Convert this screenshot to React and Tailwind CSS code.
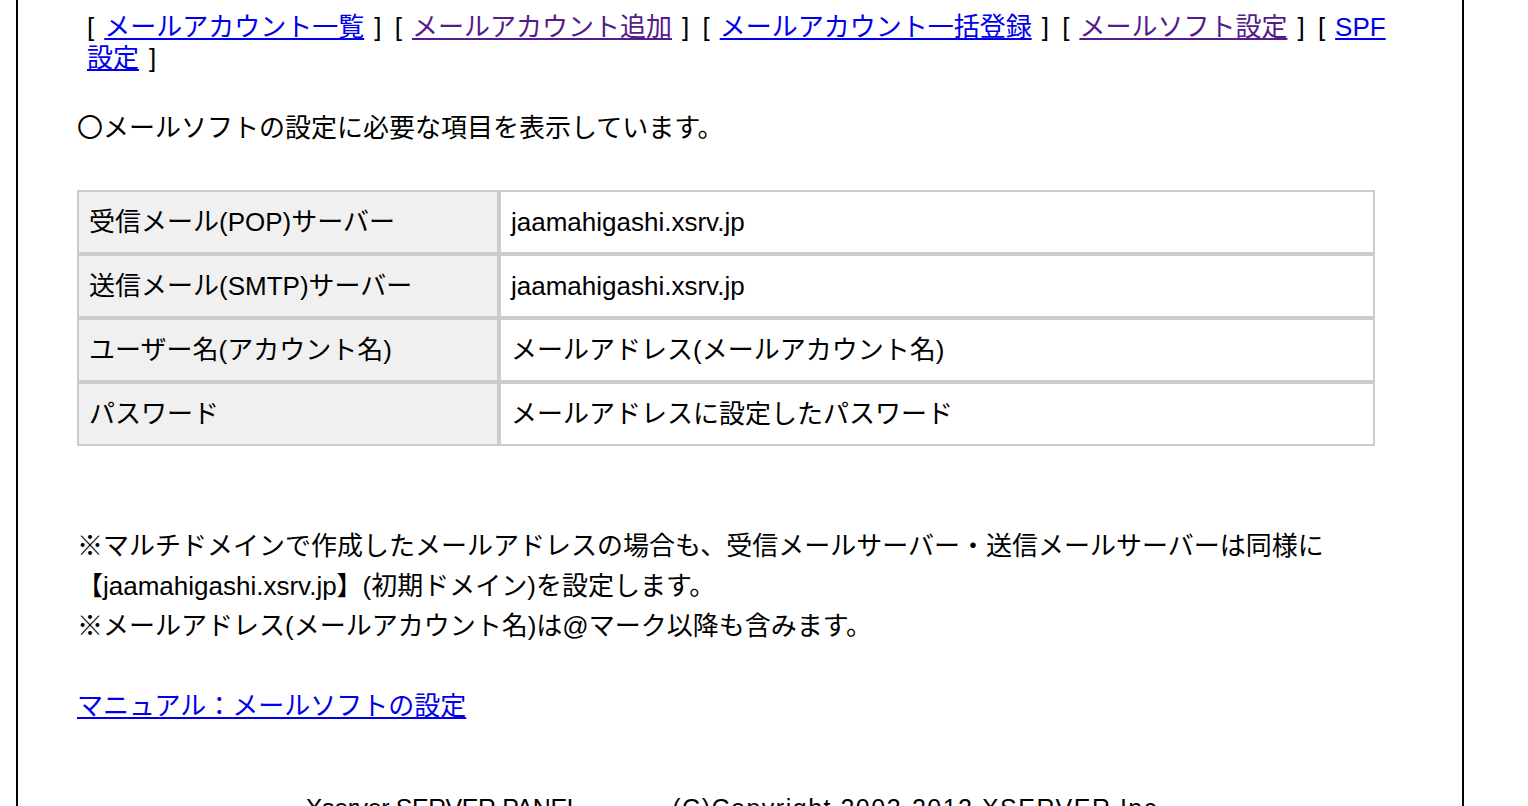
import React from 'react';

const font = { fontFamily: '"Liberation Sans", "Noto Sans CJK JP", sans-serif' };

export default function App() {

    const navLinks = [
        { label: "メールアカウント一覧", visited: false },
        { label: "メールアカウント追加", visited: true },
        { label: "メールアカウント一括登録", visited: false },
        { label: "メールソフト設定", visited: true },
    ];

    const rows = [
        { name: "受信メール(POP)サーバー", value: "jaamahigashi.xsrv.jp" },
        { name: "送信メール(SMTP)サーバー", value: "jaamahigashi.xsrv.jp" },
        { name: "ユーザー名(アカウント名)", value: "メールアドレス(メールアカウント名)" },
        { name: "パスワード", value: "メールアドレスに設定したパスワード" },
    ];

    return (
        <div className="min-h-screen bg-white text-black font-['Liberation_Sans','Noto_Sans_CJK_JP',sans-serif]">
            <div className="ml-[16px] w-[1448px] border-x-2 border-black pl-[59px] pb-10 min-h-[900px]">
                {/* top navigation */}
                <div className="pt-[12px] pl-[10px] text-[26px] leading-[31px]">
                    {navLinks.map((link, index) => (
                        <span key={index} className="mr-[6px]">
                            [<a href="#" className={`mx-[10px] underline ${link.visited ? "text-[#551a8b]" : "text-[#0000ee]"}`}>{link.label}</a>]{" "}
                        </span>
                    ))}
                    <span>
                        [<a href="#" className="mx-[10px] underline text-[#0000ee]">SPF<br />設定</a>]
                    </span>
                </div>

                <p className="mt-[34px] text-[26px] leading-[40px]">
                    〇メールソフトの設定に必要な項目を表示しています。
                </p>

                {/* settings table */}
                <table className="mt-[42px] w-[1298px] border-separate border-spacing-0 text-[26px] leading-[40px]">
                    <tbody>
                        {rows.map((row, index) => (
                            <tr key={index}>
                                <td className="w-[422px] border-2 border-[#cccccc] bg-[#f0f0f0] px-[10px] py-[10px]">{row.name}</td>
                                <td className="border-2 border-[#cccccc] bg-white px-[10px] py-[10px]">{row.value}</td>
                            </tr>
                        ))}
                    </tbody>
                </table>

                {/* notes */}
                <div className="mt-[80px] text-[26px] leading-[40px]">
                    ※マルチドメインで作成したメールアドレスの場合も、受信メールサーバー・送信メールサーバーは同様に<br />
                    【jaamahigashi.xsrv.jp】(初期ドメイン)を設定します。<br />
                    ※メールアドレス(メールアカウント名)は@マーク以降も含みます。<br />
                    <br />
                    <a href="#" className="underline text-[#0000ee]">マニュアル：メールソフトの設定</a>
                </div>

                {/* footer */}
                <div className="mt-[62px] -ml-[59px] pr-[8px] flex justify-center gap-[92px] text-[25px] leading-[40px]" style={font}>
                    <span className="tracking-[-0.4px]">Xserver SERVER PANEL</span>
                    <span className="tracking-[1.5px]">(C)Copyright 2003-2012 XSERVER Inc.</span>
                </div>
            </div>
        </div>
    );
}
